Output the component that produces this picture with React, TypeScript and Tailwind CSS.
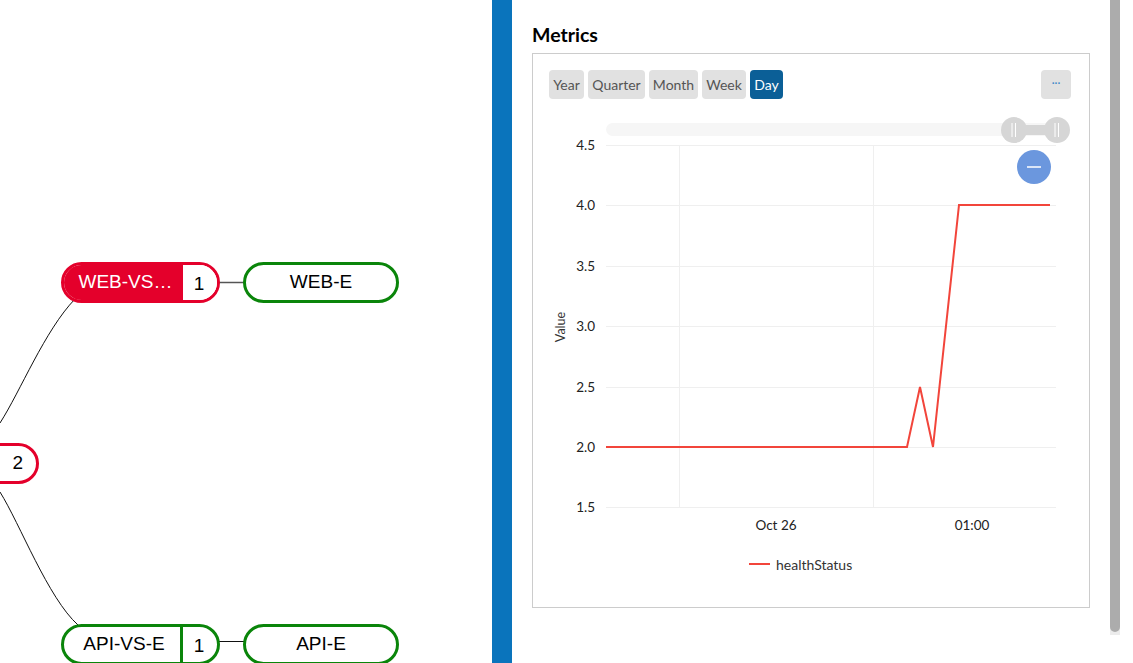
import { ReactElement } from "react";

const RED = "#e4002b";
const GREEN = "#0a850a";

const ranges = [
  { label: "Year", w: "w-[35px]" },
  { label: "Quarter", w: "w-[57px]" },
  { label: "Month", w: "w-[49px]" },
  { label: "Week", w: "w-[44px]" },
];

const yTicks = [
  { v: "4.5", y: 46 },
  { v: "4.0", y: 106 },
  { v: "3.5", y: 167 },
  { v: "3.0", y: 227 },
  { v: "2.5", y: 288 },
  { v: "2.0", y: 348 },
  { v: "1.5", y: 408 },
];

const series = "73,348 374,348 387,288 400,348 426,106 517,106";

function Diagram(): ReactElement {
  return (
    <div className="relative w-[492px] h-full bg-white overflow-hidden font-['Liberation_Sans',Arial,sans-serif]">
      <svg className="absolute inset-0" width={492} height={663}>
        <path d="M 0 423 C 20 392, 45 330, 75 299" fill="none" stroke="#111" strokeWidth={1} />
        <path d="M 0 492 C 20 524, 48 598, 78 625" fill="none" stroke="#111" strokeWidth={1} />
        <line x1={219} y1={282.5} x2={245} y2={282.5} stroke="#555" strokeWidth={1.5} />
        <line x1={219} y1={641.5} x2={245} y2={641.5} stroke="#111" strokeWidth={1} />
      </svg>

      {/* WEB-VS-E */}
      <div
        className="absolute left-[61px] top-[262px] w-[159px] h-[41px] rounded-full border-[3px] overflow-hidden flex text-[19px]"
        style={{ borderColor: RED }}
      >
        <div className="flex-1 flex items-center justify-center text-white pl-1" style={{ background: RED }}>
          WEB-VS…
        </div>
        <div className="w-[34px] bg-white flex items-center justify-center text-black pt-[3px] pr-[2px]">1</div>
      </div>

      <div
        className="absolute left-[243px] top-[262px] w-[156px] h-[41px] rounded-full border-[3px] bg-white flex items-center justify-center text-[19px] text-black"
        style={{ borderColor: GREEN }}
      >
        WEB-E
      </div>

      {/* parent, cut at the left edge */}
      <div
        className="absolute left-[-60px] top-[443px] w-[99px] h-[41px] rounded-r-full border-[3px] bg-white flex items-center justify-end pr-[13px] text-[19px] text-black"
        style={{ borderColor: RED }}
      >
        2
      </div>

      {/* API-VS-E */}
      <div
        className="absolute left-[61px] top-[624px] w-[159px] h-[41px] rounded-full border-[3px] bg-white overflow-hidden flex text-[19px] text-black"
        style={{ borderColor: GREEN }}
      >
        <div className="flex-1 flex items-center justify-center pl-1">API-VS-E</div>
        <div className="w-[3px]" style={{ background: GREEN }} />
        <div className="w-[34px] flex items-center justify-center pt-[3px] pr-[2px]">1</div>
      </div>

      <div
        className="absolute left-[243px] top-[624px] w-[156px] h-[41px] rounded-full border-[3px] bg-white flex items-center justify-center text-[19px] text-black"
        style={{ borderColor: GREEN }}
      >
        API-E
      </div>
    </div>
  );
}

function Chart(): ReactElement {
  return (
    <svg width={556} height={508} className="block font-['Lato',sans-serif]">
      {/* zoom slider */}
      <rect x={73} y={24} width={451} height={13} rx={6.5} fill="#f6f6f6" />
      <rect x={481} y={26} width={43} height={10} fill="#d6d6d6" />
      {[481, 524].map((cx) => (
        <g key={cx}>
          <circle cx={cx} cy={31} r={13} fill="#d6d6d6" />
          <line x1={cx - 2} y1={24} x2={cx - 2} y2={38} stroke="#fff" strokeWidth={1} />
          <line x1={cx + 1.5} y1={24} x2={cx + 1.5} y2={38} stroke="#fff" strokeWidth={1} />
        </g>
      ))}

      {/* grid */}
      {yTicks.map((t) => (
        <g key={t.v}>
          <line x1={73} y1={t.y + 0.5} x2={523} y2={t.y + 0.5} stroke="#efefef" strokeWidth={1} />
          <text x={62} y={t.y + 2} textAnchor="end" dominantBaseline="middle" fontSize={13.5} fill="#222">
            {t.v}
          </text>
        </g>
      ))}
      <line x1={146.5} y1={46} x2={146.5} y2={408} stroke="#efefef" strokeWidth={1} />
      <line x1={340.5} y1={46} x2={340.5} y2={408} stroke="#efefef" strokeWidth={1} />

      <text x={29} y={228} transform="rotate(-90 29 228)" textAnchor="middle" dominantBaseline="middle" fontSize={12.5} fill="#333">
        Value
      </text>
      <text x={243} y={428} textAnchor="middle" dominantBaseline="middle" fontSize={13.5} fill="#222">
        Oct 26
      </text>
      <text x={439} y={428} textAnchor="middle" dominantBaseline="middle" fontSize={13.5} fill="#222">
        01:00
      </text>

      <polyline points={series} fill="none" stroke="#f2453b" strokeWidth={2} strokeLinejoin="miter" />

      {/* zoom reset */}
      <circle cx={501} cy={68} r={17} fill="#6b97de" />
      <line x1={494} y1={68} x2={508} y2={68} stroke="#fff" strokeWidth={1.5} />

      {/* legend */}
      <line x1={216} y1={465} x2={237} y2={465} stroke="#f2453b" strokeWidth={2} />
      <text x={243} y={467} dominantBaseline="middle" fontSize={14} fill="#333">
        healthStatus
      </text>
    </svg>
  );
}

function MetricsPanel(): ReactElement {
  return (
    <div className="flex-1 h-full bg-white flex font-['Lato',sans-serif]">
      <div className="pl-5 pt-[23px] w-[578px]">
        <h2 className="text-[19.5px] leading-6 font-bold text-black">Metrics</h2>
        <div className="mt-[6px] w-[558px] h-[555px] border border-[#cccccc] bg-white">
          <div className="flex justify-between pl-4 pr-[18px] pt-4">
            <div className="flex gap-1">
              {ranges.map((r) => (
                <button
                  key={r.label}
                  className={`${r.w} h-[29px] rounded-sm bg-[#e1e1e1] text-[14px] text-[#555] flex items-center justify-center`}
                >
                  {r.label}
                </button>
              ))}
              <button className="w-[33px] h-[29px] rounded-sm bg-[#0b5f97] text-[14px] text-white flex items-center justify-center">
                Day
              </button>
            </div>
            <button className="w-[30px] h-[29px] rounded-sm bg-[#e1e1e1] text-[11px] leading-none text-[#3a86c8] flex items-center justify-center pb-1">
              ···
            </button>
          </div>
          <Chart />
        </div>
      </div>
      <div className="ml-5 w-[10px] h-[635px] bg-[#ececec]">
        <div className="w-[10px] h-[632px] bg-[#acacac] rounded-b-[5px]" />
      </div>
    </div>
  );
}

export default function App(): ReactElement {
  return (
    <div className="w-[1133px] h-[663px] flex overflow-hidden bg-white">
      <Diagram />
      <div className="w-[20px] h-full bg-[#0a74bc] shadow-[-3px_0_6px_rgba(0,0,0,0.08)]" />
      <MetricsPanel />
    </div>
  );
}
